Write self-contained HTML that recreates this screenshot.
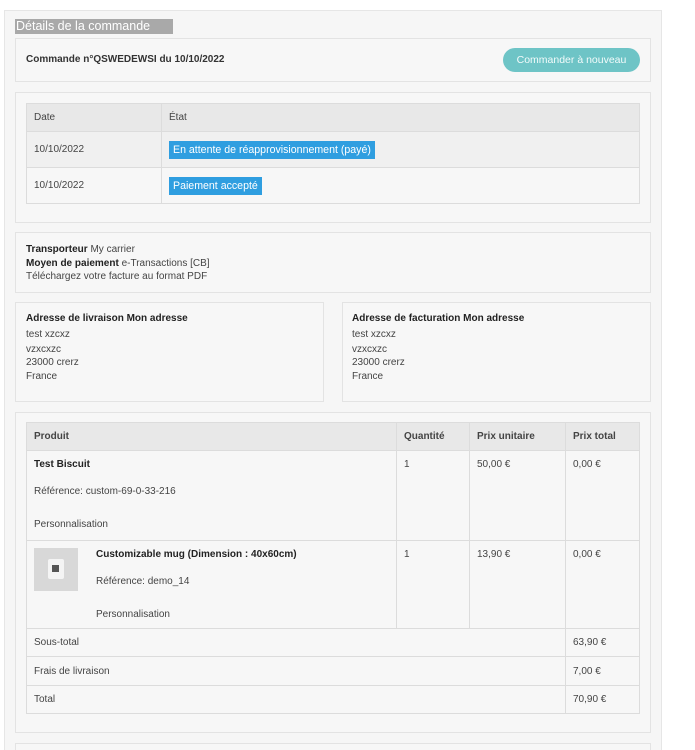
<!DOCTYPE html>
<html><head><meta charset="utf-8"><style>
*{margin:0;padding:0;box-sizing:border-box}
html,body{width:695px;height:750px;overflow:hidden}
body{background:#fff;font-family:"Liberation Sans",sans-serif;font-size:10px;color:#333;position:relative}
.a{position:absolute}
.outer{left:4px;top:10px;width:658px;height:760px;background:#f6f6f6;border:1px solid #e6e6e6}
.box{position:absolute;border:1px solid #e3e3e3;background:#f7f7f7}
table{position:absolute;border-collapse:collapse;font-size:10px}
td,th{border:1px solid #dcdcdc;text-align:left;vertical-align:top;padding:0 7px;font-weight:normal;color:#444}
th{background:#e8e8e8;font-weight:bold;vertical-align:middle;color:#444}
.badge{display:inline-block;background:#2f9ee0;color:#fff;padding:3px 4px;font-size:10.6px}
b{color:#222}
</style></head><body>
<div class="a outer"></div>
<div class="a" style="left:15px;top:19px;width:158px;height:15px;background:#a9a9a9;color:#fff;font-size:12.5px;line-height:15px;padding-left:1px">Détails de la commande</div>

<div class="box" style="left:15px;top:38px;width:636px;height:44px"></div>
<div class="a" style="left:26px;top:54px;font-size:10px;font-weight:bold;color:#333">Commande n°QSWEDEWSI du 10/10/2022</div>
<div class="a" style="left:503px;top:48px;width:137px;height:24px;border-radius:12px;background:#6ec4c6;color:#f3fbfb;text-align:center;line-height:25px;font-size:10.5px">Commander à nouveau</div>

<div class="box" style="left:15px;top:92px;width:636px;height:131px"></div>
<table style="left:26px;top:103px;width:614px">
<tr style="height:28px"><th style="width:135px;font-weight:normal">Date</th><th style="font-weight:normal">État</th></tr>
<tr style="height:36px;background:#f0f0f0"><td style="vertical-align:middle">10/10/2022</td><td style="vertical-align:middle;padding-left:7px"><span class="badge">En attente de réapprovisionnement (payé)</span></td></tr>
<tr style="height:36px"><td style="vertical-align:middle">10/10/2022</td><td style="vertical-align:middle"><span class="badge">Paiement accepté</span></td></tr>
</table>

<div class="box" style="left:15px;top:232px;width:636px;height:61px"></div>
<div class="a" style="left:26px;top:243px;line-height:13.5px;color:#444"><b>Transporteur</b> My carrier<br><b>Moyen de paiement</b> e-Transactions [CB]<br>Téléchargez votre facture au format PDF</div>

<div class="box" style="left:15px;top:302px;width:309px;height:100px"></div>
<div class="a" style="left:26px;top:312px;line-height:13.5px;color:#444"><b>Adresse de livraison Mon adresse</b><br><span style="line-height:17px">test xzcxz</span><br>vzxcxzc<br>23000 crerz<br>France</div>
<div class="box" style="left:342px;top:302px;width:309px;height:100px"></div>
<div class="a" style="left:352px;top:312px;line-height:13.5px;color:#444"><b>Adresse de facturation Mon adresse</b><br><span style="line-height:17px">test xzcxz</span><br>vzxcxzc<br>23000 crerz<br>France</div>

<div class="box" style="left:15px;top:412px;width:636px;height:321px"></div>
<table style="left:26px;top:422px;width:614px">
<tr style="height:28px"><th style="width:370px">Produit</th><th style="width:73px">Quantité</th><th style="width:96px">Prix unitaire</th><th>Prix total</th></tr>
<tr style="height:90px"><td style="padding-top:8px"><b>Test Biscuit</b><div style="margin-top:16px">Référence: custom-69-0-33-216</div><div style="margin-top:22px">Personnalisation</div></td><td style="padding-top:8px">1</td><td style="padding-top:8px">50,00 €</td><td style="padding-top:8px">0,00 €</td></tr>
<tr style="height:88px"><td style="padding-top:8px;position:relative"><div style="position:absolute;left:7px;top:7px;width:44px;height:43px;background:#d8d8d8"><div style="position:absolute;left:14px;top:11px;width:16px;height:20px;background:#f4f4f4;border-radius:2px"></div><div style="position:absolute;left:18px;top:17px;width:7px;height:7px;background:#555"></div></div><div style="margin-left:62px"><b>Customizable mug (Dimension : 40x60cm)</b><div style="margin-top:16px">Référence: demo_14</div><div style="margin-top:22px">Personnalisation</div></div></td><td style="padding-top:8px">1</td><td style="padding-top:8px">13,90 €</td><td style="padding-top:8px">0,00 €</td></tr>
<tr style="height:28px"><td colspan="3" style="vertical-align:middle">Sous-total</td><td style="vertical-align:middle">63,90 €</td></tr>
<tr style="height:29px"><td colspan="3" style="vertical-align:middle">Frais de livraison</td><td style="vertical-align:middle">7,00 €</td></tr>
<tr style="height:28px"><td colspan="3" style="vertical-align:middle">Total</td><td style="vertical-align:middle">70,90 €</td></tr>
</table>

<div class="box" style="left:15px;top:743px;width:636px;height:30px"></div>
</body></html>
